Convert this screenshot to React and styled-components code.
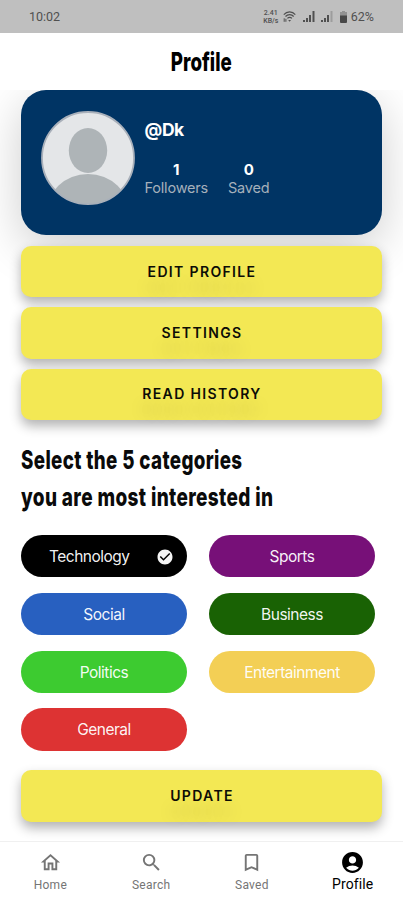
import styled, { createGlobalStyle } from 'styled-components'
import {
  MdOutlineHome,
  MdSearch,
  MdBookmarkBorder,
  MdAccountCircle,
  MdCheckCircle
} from 'react-icons/md'

const GlobalStyle = createGlobalStyle`
  * {
    box-sizing: border-box;
  }
  body {
    margin: 0;
    background: #fff;
    font-family: Inter, 'Liberation Sans', sans-serif;
  }
`

const Screen = styled.div`
  display: flex;
  flex-direction: column;
  height: 900px;
  overflow: hidden;
  background: #fff;
`

const StatusBar = styled.div`
  display: flex;
  flex: none;
  align-items: center;
  justify-content: space-between;
  height: 33px;
  padding: 0 29px;
  background: #bfbfbf;
  color: #505050;
  font-family: Roboto, sans-serif;
  font-size: 12.5px;
`

const StatusGroup = styled.div`
  display: flex;
  align-items: center;
  svg {
    display: block;
  }
`

const StatusIcons = styled.div`
  display: flex;
  align-items: center;
  gap: 6.5px;
`

const NetSpeed = styled.div`
  width: 15px;
  margin-right: 5px;
  font-size: 7px;
  font-weight: 500;
  line-height: 8px;
  text-align: center;
  white-space: nowrap;
`

const BatteryText = styled.span`
  margin-left: 4px;
`

const Header = styled.header`
  position: relative;
  z-index: 1;
  display: flex;
  flex: none;
  align-items: center;
  justify-content: center;
  height: 57px;
  background: #fff;
`

// narrow display face made out of a heavy Inter
const Condensed = styled.span`
  display: inline-block;
  transform: scaleX(${props => props.$scale});
  transform-origin: ${props => props.$origin || 'left'};
  white-space: nowrap;
  font-size: 26px;
  font-weight: 800;
  line-height: 37px;
  letter-spacing: ${props => props.$spacing || '0'};
`

const Content = styled.main`
  display: flex;
  flex: 1;
  flex-direction: column;
  min-height: 0;
  padding: 0 21px;
`

const Card = styled.section`
  display: flex;
  flex: none;
  height: 145px;
  padding: 21px 20px 20px;
  border-radius: 25px;
  background: #003464;
  box-shadow: 0 12px 48px rgba(0, 0, 0, 0.2);
`

const Avatar = styled.svg`
  flex: none;
  width: 94px;
  height: 94px;
`

const UserInfo = styled.div`
  margin-left: 9.5px;
  padding-top: 7px;
`

const Username = styled.div`
  color: #fff;
  font-size: 17.5px;
  font-weight: 700;
  line-height: 24px;
  letter-spacing: -0.4px;
`

const Stats = styled.div`
  display: flex;
  gap: 20px;
  margin-top: 19px;
`

const Stat = styled.div`
  color: #a5b0bb;
  font-size: 14.5px;
  line-height: 18px;
  letter-spacing: -0.2px;
  text-align: center;
`

const StatValue = styled.div`
  color: #fff;
  font-size: 15px;
  font-weight: 700;
  line-height: 18px;
`

const ButtonList = styled.div`
  display: flex;
  flex: none;
  flex-direction: column;
  gap: 10px;
  margin-top: 11px;
`

const Button = styled.button`
  flex: none;
  height: 51.4px;
  padding: 0 0 1px 1px;
  border: 0;
  border-radius: 10px;
  background: #f3e854;
  box-shadow: 0 6px 12px rgba(0, 0, 0, 0.3);
  color: #0c0c06;
  font-family: inherit;
  font-size: 14px;
  font-weight: 600;
  letter-spacing: 1.35px;
  text-shadow: 0 16px 16px rgba(0, 0, 0, 0.15);
`

const Heading = styled.h2`
  display: flex;
  flex: none;
  flex-direction: column;
  align-items: flex-start;
  margin: 20.6px 0 20.4px;
  color: #0a0a0a;
`

const Categories = styled.div`
  display: grid;
  flex: none;
  grid-template-columns: 166px 166px;
  gap: 15.4px 22px;
  margin-bottom: 19.6px;
`

const Category = styled.div`
  display: flex;
  align-items: center;
  justify-content: ${props => (props.$checked ? 'space-between' : 'center')};
  height: 42.3px;
  padding: ${props => (props.$checked ? '1px 13px 0 28px' : '1px 0 0')};
  border-radius: 22px;
  background: ${props => props.$color};
  color: rgba(255, 255, 255, 0.96);
  font-size: 15.5px;
  letter-spacing: -0.5px;
  white-space: nowrap;
`

const TabBar = styled.nav`
  position: relative;
  z-index: 1;
  display: grid;
  flex: none;
  grid-template-columns: repeat(4, 1fr);
  height: 59px;
  border-top: 1px solid #f0f0f0;
  background: #fff;
`

const Tab = styled.div`
  display: flex;
  flex-direction: column;
  align-items: center;
  padding-top: ${props => (props.$active ? '8px' : '9px')};
  color: ${props => (props.$active ? '#000' : '#757575')};
  font-family: Roboto, sans-serif;
  font-size: ${props => (props.$active ? '14px' : '12px')};
  line-height: 16px;
  letter-spacing: ${props => (props.$active ? '0.1px' : '0.25px')};
  svg {
    flex: none;
    margin-bottom: ${props => (props.$active ? '1px' : '3px')};
  }
`

const buttons = ['EDIT PROFILE', 'SETTINGS', 'READ HISTORY']

const categories = [
  { name: 'Technology', color: '#000', checked: true },
  { name: 'Sports', color: '#771078' },
  { name: 'Social', color: '#2860c0' },
  { name: 'Business', color: '#196204' },
  { name: 'Politics', color: '#3dcb30' },
  { name: 'Entertainment', color: '#f3cf55' },
  { name: 'General', color: '#dd3333' }
]

const tabs = [
  { name: 'Home', Icon: MdOutlineHome, size: 23 },
  { name: 'Search', Icon: MdSearch, size: 23 },
  { name: 'Saved', Icon: MdBookmarkBorder, size: 23 },
  { name: 'Profile', Icon: MdAccountCircle, size: 25, active: true }
]

const WifiIcon = () => (
  <svg width="13" height="12" viewBox="0 0 13 12" fill="none" stroke="#505050">
    <path d="M.8 3.6C4-.1 9.3-.1 12.3 3.6" strokeWidth="1.2" />
    <path d="M2.5 5.5c2.3-2.5 6-2.5 8.2 0M4.4 7.3c1.3-1.3 3.2-1.3 4.5 0" strokeWidth="1.2" />
    <path d="M5.2 9H8l-1.4 1.7z" fill="#505050" stroke="none" />
    <path d="M1.2 7.3v3.5M2.9 7.8v3" strokeWidth="1" />
  </svg>
)

const SignalIcon = ({ weak }) => (
  <svg width="12" height="11" viewBox="0 0 12 11" fill="#505050">
    <path d="M0 9h2v2H0zM3 7h2v4H3zM6 4h2v7H6z" />
    <path d="M9.5 0h2v11h-2z" opacity={weak ? 0.3 : 1} />
  </svg>
)

const BatteryIcon = () => (
  <svg width="7" height="12" viewBox="0 0 7 12">
    <path d="M2 0h3v1h2v4H0V1h2z" fill="#929292" />
    <path d="M0 4.5h7V11q0 1-1 1H1q-1 0-1-1z" fill="#484848" />
  </svg>
)

const UserAvatar = () => (
  <Avatar viewBox="0 0 94 94">
    <defs>
      <clipPath id="face">
        <circle cx="47" cy="47" r="46" />
      </clipPath>
    </defs>
    <circle cx="47" cy="47" r="46" fill="#e4e6e8" />
    <g clipPath="url(#face)" fill="#aeb4b7">
      <ellipse cx="47" cy="39.5" rx="19.2" ry="22.5" />
      <ellipse cx="47" cy="103" rx="42" ry="40" />
    </g>
    <circle cx="47" cy="47" r="46" fill="none" stroke="#a9b0ba" strokeWidth="1.8" />
  </Avatar>
)

const App = () => {
  return (
    <Screen>
      <GlobalStyle />
      <StatusBar>
        <span>10:02</span>
        <StatusGroup>
          <NetSpeed>
            2.41
            <br />
            KB/s
          </NetSpeed>
          <StatusIcons>
            <WifiIcon />
            <SignalIcon />
            <SignalIcon weak />
            <BatteryIcon />
          </StatusIcons>
          <BatteryText>62%</BatteryText>
        </StatusGroup>
      </StatusBar>
      <Header>
        <Condensed $scale={0.72} $origin="center">Profile</Condensed>
      </Header>
      <Content>
        <Card>
          <UserAvatar />
          <UserInfo>
            <Username>@Dk</Username>
            <Stats>
              <Stat>
                <StatValue>1</StatValue>
                Followers
              </Stat>
              <Stat>
                <StatValue>0</StatValue>
                Saved
              </Stat>
            </Stats>
          </UserInfo>
        </Card>
        <ButtonList>
          {buttons.map(label => (
            <Button key={label}>{label}</Button>
          ))}
        </ButtonList>
        <Heading>
          <Condensed $scale={0.722} $spacing="0.5px">Select the 5 categories</Condensed>
          <Condensed $scale={0.73} $spacing="0.5px">you are most interested in</Condensed>
        </Heading>
        <Categories>
          {categories.map(({ name, color, checked }) => (
            <Category key={name} $color={color} $checked={checked}>
              {name}
              {checked && <MdCheckCircle size={18} />}
            </Category>
          ))}
        </Categories>
        <Button>UPDATE</Button>
      </Content>
      <TabBar>
        {tabs.map(({ name, Icon, size, active }) => (
          <Tab key={name} $active={active}>
            <Icon size={size} />
            {name}
          </Tab>
        ))}
      </TabBar>
    </Screen>
  )
}

export default App
